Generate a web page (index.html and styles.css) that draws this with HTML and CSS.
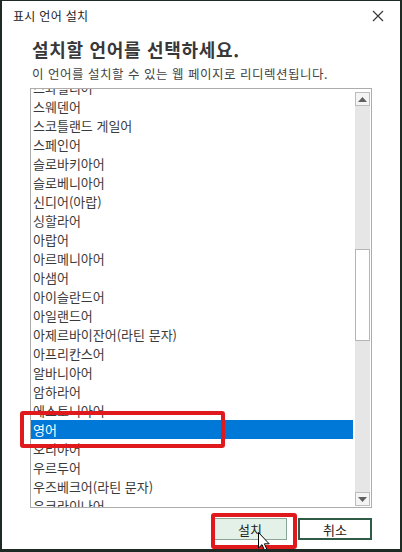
FILE: index.html
```html
<!DOCTYPE html>
<html lang="ko">
<head>
    <meta charset="UTF-8">
    <title>표시 언어 설치</title>
    <link rel="stylesheet" href="styles.css">
</head>
<body>
    <div class="window">
        <div class="titlebar">
            <span class="title">표시 언어 설치</span>
            <svg class="close" width="12" height="12" viewBox="0 0 12 12">
                <path d="M1 1 L11 11 M11 1 L1 11" stroke="#333" stroke-width="1.1" fill="none"/>
            </svg>
        </div>
        <div class="content">
            <h1 class="heading">설치할 언어를 선택하세요.</h1>
            <p class="subtitle">이 언어를 설치할 수 있는 웹 페이지로 리디렉션됩니다.</p>
            <div class="listbox">
                <div class="items">
                    <ul class="lang-list">
                        <li>스와힐리어</li>
                        <li>스웨덴어</li>
                        <li>스코틀랜드 게일어</li>
                        <li>스페인어</li>
                        <li>슬로바키아어</li>
                        <li>슬로베니아어</li>
                        <li>신디어(아랍)</li>
                        <li>싱할라어</li>
                        <li>아랍어</li>
                        <li>아르메니아어</li>
                        <li>아샘어</li>
                        <li>아이슬란드어</li>
                        <li>아일랜드어</li>
                        <li>아제르바이잔어(라틴 문자)</li>
                        <li>아프리칸스어</li>
                        <li>알바니아어</li>
                        <li>암하라어</li>
                        <li>에스토니아어</li>
                        <li class="selected">영어</li>
                        <li>오리야어</li>
                        <li>우르두어</li>
                        <li>우즈베크어(라틴 문자)</li>
                        <li>우크라이나어</li>
                    </ul>
                </div>
                <div class="scrollbar">
                    <div class="scroll-btn">
                        <svg width="9" height="5" viewBox="0 0 9 5"><path d="M0 5 L4.5 0 L9 5 Z" fill="#606060"/></svg>
                    </div>
                    <div class="track">
                        <div class="thumb"></div>
                    </div>
                    <div class="scroll-btn">
                        <svg width="9" height="5" viewBox="0 0 9 5"><path d="M0 0 L9 0 L4.5 5 Z" fill="#606060"/></svg>
                    </div>
                </div>
            </div>
            <div class="buttons">
                <div class="btn btn-install">설치</div>
                <div class="btn btn-cancel">취소</div>
            </div>
        </div>

        <div class="mark mark-item"></div>
        <div class="mark mark-button"></div>
        <svg class="cursor" width="13" height="20" viewBox="0 0 13 20">
            <path d="M0.5 0.5 L0.5 16 L4 12.6 L6.6 18.6 L9 17.6 L6.4 11.8 L11.2 11.8 Z" fill="#fff" stroke="#000" stroke-width="1"/>
        </svg>
    </div>
</body>
</html>
```

FILE: styles.css
```css
* {
    box-sizing: border-box;
}
body {
    margin: 0;
    font-family: "Noto Sans CJK KR", "Noto Sans", sans-serif;
    background-color: #fff;
}
.window {
    position: relative;
    width: 402px;
    height: 552px;
    background-color: #fff;
    border-top: 1px solid #1d2b24;
    border-left: 2px solid #1d2b24;
    border-right: 2px solid #1d2b24;
    border-bottom: 3px solid #1d2b24;
    overflow: hidden;
}
.titlebar {
    height: 30px;
    display: flex;
    align-items: center;
    justify-content: space-between;
    padding-left: 11px;
    padding-right: 16px;
}
.title {
    font-size: 12px;
    line-height: 16px;
    letter-spacing: 0.3px;
    color: #222;
}
.close {
    display: block;
}
.content {
    width: 370px;
    padding-left: 28px;
}
.heading {
    margin: 6px 0 0 2px;
    font-size: 18px;
    line-height: 24px;
    letter-spacing: 0.7px;
    font-weight: bold;
    color: #383838;
}
.subtitle {
    margin: 5px 0 0 2px;
    font-size: 12.5px;
    line-height: 16px;
    letter-spacing: 0.5px;
    color: #444;
}
.listbox {
    margin-top: 6px;
    width: 342px;
    height: 420px;
    border: 1px solid #acacac;
    display: flex;
}
.items {
    flex: 1;
    overflow: hidden;
    margin-right: 2px;
}
.lang-list {
    list-style: none;
    margin: -11px 0 0 0;
    padding: 0;
}
.lang-list li {
    height: 19px;
    line-height: 19px;
    padding-left: 2px;
    font-size: 13px;
    color: #3a3a3a;
    white-space: nowrap;
}
.lang-list li.selected {
    background-color: #0078d7;
    color: #fff;
}
.scrollbar {
    width: 16px;
    display: flex;
    flex-direction: column;
    padding: 3px 1px 1px 0;
}
.scroll-btn {
    height: 14px;
    border: 1px solid #bcbcbc;
    background-color: #f4f4f4;
    display: flex;
    align-items: center;
    justify-content: center;
}
.track {
    flex: 1;
    background-color: #e6e6e6;
}
.thumb {
    margin-top: 143px;
    height: 92px;
    background-color: #fff;
    border: 1px solid #b5b5b5;
}
.buttons {
    display: flex;
    justify-content: flex-end;
    gap: 11px;
    margin-top: 10px;
    width: 342px;
}
.btn {
    height: 22px;
    display: flex;
    align-items: center;
    justify-content: center;
    font-size: 13px;
    color: #222;
}
.btn-install {
    width: 74px;
    background-color: #e4f1e9;
    border: 1px solid #8aa596;
}
.btn-cancel {
    width: 74px;
    background-color: #fff;
    border: 2px solid #2e5c47;
}
.mark {
    position: absolute;
    border: 4px solid #e01a1c;
    border-radius: 3px;
}
.mark-item {
    left: 18px;
    top: 410px;
    width: 205px;
    height: 37px;
}
.mark-button {
    left: 209px;
    top: 512px;
    width: 86px;
    height: 36px;
}
.cursor {
    position: absolute;
    left: 256px;
    top: 531px;
}
```
